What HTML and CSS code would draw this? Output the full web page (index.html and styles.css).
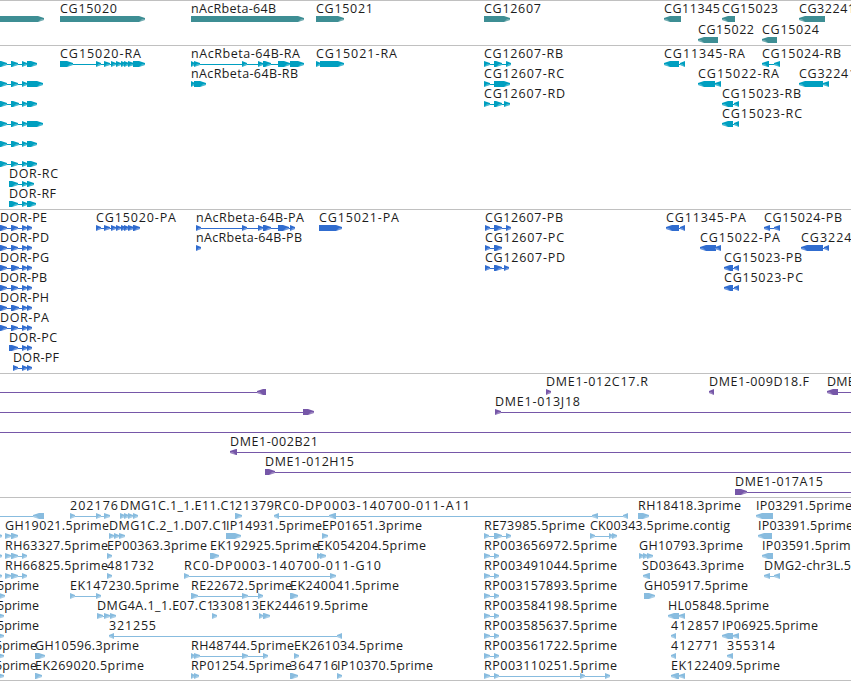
FILE: index.html
```
<!DOCTYPE html>
<html lang="en">

<head>
    <meta charset="UTF-8">
    <meta name="viewport" content="width=device-width, initial-scale=1.0">
    <title>Genome Browser</title>
    <link rel="stylesheet" href="styles.css">
</head>

<body>
    <main class="browser">
        <svg class="track genes" id="genes"></svg>
        <svg class="track transcripts" id="transcripts"></svg>
        <svg class="track proteins" id="proteins"></svg>
        <svg class="track clones" id="clones"></svg>
        <svg class="track ests" id="ests"></svg>
    </main>

    <script src="script.js"></script>
</body>

</html>
```
FILE: styles.css
```
body {
    margin: 0;
    background: white;
    overflow: hidden;
}

.browser {
    display: flex;
    flex-direction: column;
    width: 851px;
    border-bottom: 1px solid #c0c0c0;
}

.track {
    display: block;
    box-sizing: border-box;
    width: 851px;
    box-shadow: inset 0 1px #c0c0c0;
    overflow: hidden;
}

.track text {
    font-family: "Open Sans", "Noto Sans", sans-serif;
    font-size: 12.5px;
    fill: #1c1c1c;
}

.genes {
    height: 45px;
    color: #3e8e94;
}

.transcripts {
    height: 164px;
    color: #009fc0;
}

.proteins {
    height: 164px;
    color: #306ccf;
}

.clones {
    height: 124px;
    color: #7657a8;
}

.ests {
    height: 183px;
    color: #88bcdf;
}

.exon,
.intron {
    fill: currentColor;
}

.intron {
    shape-rendering: crispEdges;
}

.shade {
    fill: white;
    opacity: 0.25;
}
```
FILE: script.js
```
// [row, strand, exons, label, label start, label end]
// exons are "start:end" pairs, joined by an intron line
const dorExons = "-4:7 11:18 22:27 27:32";
const rpExons = "484:490 494:499";

const tracks = {
    genes: [
        [0, "+", "-10:44"],
        [0, "+", "60:145", "CG15020", 60, 117],
        [0, "+", "191:304", "nAcRbeta-64B", 191, 276],
        [0, "+", "316:344", "CG15021", 316, 373],
        [0, "+", "484:510", "CG12607", 484, 541],
        [0, "-", "664:681", "CG11345", 664, 720],
        [0, "-", "722:735", "CG15023", 722, 778],
        [0, "-", "799:825", "CG32241", 799, 855],
        [1, "-", "698:718", "CG15022", 698, 754],
        [1, "-", "762:777", "CG15024", 762, 819]
    ],
    transcripts: [
        [0, "+", "-4:7 11:18 22:27 27:37"],
        [1, "+", "-4:7 11:18 22:27 27:43"],
        [2, "+", "-4:7 11:19 22:27 27:37"],
        [3, "+", "-4:7 11:18 22:27 27:43"],
        [4, "+", "-4:7 11:19 22:27 27:37"],
        [5, "+", "-4:7 11:18 22:27 27:37"],
        [6, "+", "9:18 22:27 27:34", "DOR-RC", 9, 58],
        [7, "+", "9:18 22:27 27:36", "DOR-RF", 9, 56],
        [0, "+", "60:73 96:101 104:110 111:116 116:121 121:126 124:129 128:134 133:145", "CG15020-RA", 60, 141],
        [0, "+", "191:195 194:200 242:247 258:263 263:271 278:290 290:304", "nAcRbeta-64B-RA", 191, 300],
        [1, "+", "191:195 194:206", "nAcRbeta-64B-RB", 191, 298],
        [0, "+", "316:321 320:344", "CG15021-RA", 316, 397],
        [0, "+", "484:490 494:502 506:511", "CG12607-RB", 484, 563],
        [1, "+", "484:490 494:510", "CG12607-RC", 484, 564],
        [2, "+", "484:490 494:502 504:510", "CG12607-RD", 484, 565],
        [0, "-", "664:679 680:685", "CG11345-RA", 664, 745],
        [0, "-", "762:769 774:780", "CG15024-RB", 762, 841],
        [1, "-", "698:715 715:721", "CG15022-RA", 698, 779],
        [1, "-", "799:823 823:829", "CG32241-RA", 799, 878],
        [2, "-", "722:733 734:739", "CG15023-RB", 722, 801],
        [3, "-", "722:733 734:739", "CG15023-RC", 722, 802]
    ],
    proteins: [
        [0, "+", dorExons, "DOR-PE", 0, 47],
        [1, "+", dorExons, "DOR-PD", 0, 49],
        [2, "+", "-4:7 11:19 22:27 27:32", "DOR-PG", 0, 49],
        [3, "+", dorExons, "DOR-PB", 0, 47],
        [4, "+", "-4:7 11:19 22:27 27:32", "DOR-PH", 0, 49],
        [5, "+", dorExons, "DOR-PA", 0, 49],
        [6, "+", "9:18 22:27 27:32", "DOR-PC", 9, 57],
        [7, "+", "13:18 22:27 27:32", "DOR-PF", 13, 59],
        [0, "+", "96:101 104:110 111:116 116:121 121:126 124:129 128:134 133:140", "CG15020-PA", 96, 176],
        [0, "+", "196:201 242:247 258:263 263:271 278:289 290:295", "nAcRbeta-64B-PA", 196, 304],
        [1, "+", "196:201", "nAcRbeta-64B-PB", 196, 302],
        [0, "+", "319:342", "CG15021-PA", 319, 399],
        [0, "+", "485:490 494:502 506:511", "CG12607-PB", 485, 563],
        [1, "+", "485:490 494:502", "CG12607-PC", 485, 564],
        [2, "+", "485:490 494:502 504:509", "CG12607-PD", 485, 565],
        [0, "-", "666:679 680:685", "CG11345-PA", 666, 746],
        [0, "-", "764:770 774:780", "CG15024-PB", 764, 842],
        [1, "-", "700:716 715:721", "CG15022-PA", 700, 780],
        [1, "-", "801:823 824:829", "CG32241-PA", 801, 882],
        [2, "-", "724:733 734:739", "CG15023-PB", 724, 802],
        [3, "-", "724:733 734:739", "CG15023-PC", 724, 803]
    ],
    clones: [
        [0, "-", "-20:-10 257:266"],
        [0, "+", "546:551", "DME1-012C17.R", 546, 648],
        [0, "-", "709:714", "DME1-009D18.F", 709, 809],
        [0, "-", "827:838 870:880", "DME1", 827, 862],
        [1, "+", "-20:-10 303:314"],
        [1, "+", "495:501 870:880", "DME1-013J18", 495, 580],
        [2, "+", "-20:-10 870:880"],
        [3, "-", "230:237 870:880", "DME1-002B21", 230, 318],
        [4, "+", "265:275 870:880", "DME1-012H15", 265, 354],
        [5, "+", "735:747 870:880", "DME1-017A15", 735, 823]
    ],
    ests: [
        [0, "-", "-20:-10 33:44"],
        [0, "+", "70:75 96:101 104:110", "202176", 70, 118],
        [0, "+", "120:125 124:129 128:133 133:138", "DMG1C.1_1.E11.C1", 120, 236],
        [0, "+", "235:242", "21379", 235, 274],
        [0, "-", "274:279 329:336 592:598 623:628", "RC0-DP0003-140700-011-A11", 274, 470],
        [0, "+", "638:649", "RH18418.3prime", 638, 741],
        [0, "-", "756:773", "IP03291.5prime", 756, 852],

        [1, "+", "-4:2"],
        [1, "+", "5:11 11:18", "GH19021.5prime", 5, 109],
        [1, "+", "109:114 114:119 119:125", "DMG1C.2_1.D07.C1", 109, 228],
        [1, "+", "226:241", "IP14931.5prime", 226, 322],
        [1, "+", "322:328", "EP01651.3prime", 322, 422],
        [1, "+", "484:489 494:502 506:511", "RE73985.5prime", 484, 585],
        [1, "+", "590:595 609:613 612:617", "CK00343.5prime.contig", 590, 730],
        [1, "-", "758:772", "IP03391.5prime", 758, 853],

        [2, "+", "-20:-10 -4:2"],
        [2, "+", "5:11 11:18 22:27", "RH63327.5prime", 5, 108],
        [2, "+", "107:112", "EP00363.3prime", 107, 207],
        [2, "+", "210:219", "EK192925.5prime", 210, 319],
        [2, "+", "317:322 320:326", "EK054204.5prime", 317, 426],
        [2, "+", rpExons, "RP003656972.5prime", 484, 617],
        [2, "+", "639:644 643:648 647:653", "GH10793.3prime", 639, 743],
        [2, "-", "762:773", "IP03591.5prime", 762, 858],

        [3, "+", "-20:-10 -4:2"],
        [3, "+", "5:11 11:18 22:27", "RH66825.5prime", 5, 108],
        [3, "+", "107:112", "481732", 107, 154],
        [3, "+", "184:189 330:336", "RC0-DP0003-140700-011-G10", 184, 381],
        [3, "+", rpExons, "RP003491044.5prime", 484, 617],
        [3, "-", "643:650", "SD03643.3prime", 642, 744],
        [3, "-", "764:770 774:780", "DMG2-chr3L.5", 764, 851],

        [4, "+", "-4:5", "5prime", -3, 39],
        [4, "+", "70:75 96:101", "EK147230.5prime", 70, 179],
        [4, "+", "191:198 242:248 258:263", "RE22672.5prime", 191, 292],
        [4, "+", "290:298", "EK240041.5prime", 290, 399],
        [4, "+", rpExons, "RP003157893.5prime", 484, 617],
        [4, "+", "644:655", "GH05917.5prime", 644, 748],

        [5, "+", "-4:4", "5prime", -3, 39],
        [5, "+", "97:103 104:110 110:116", "DMG4A.1_1.E07.C1", 97, 214],
        [5, "+", "212:217", "330813", 212, 259],
        [5, "+", "259:263 263:270", "EK244619.5prime", 259, 368],
        [5, "+", rpExons, "RP003584198.5prime", 484, 617],
        [5, "-", "668:679 679:685", "HL05848.5prime", 668, 769],

        [6, "+", "-4:4", "5prime", -3, 39],
        [6, "-", "109:114 337:342", "321255", 109, 156],
        [6, "+", rpExons, "RP003585637.5prime", 484, 617],
        [6, "-", "671:676", "412857", 671, 719],
        [6, "-", "722:733 733:739", "IP06925.5prime", 722, 818],

        [7, "+", "-4:4", "5prime", -5, 37],
        [7, "+", "35:45", "GH10596.3prime", 35, 139],
        [7, "+", "191:195 194:200 242:248 263:268", "RH48744.5prime", 191, 294],
        [7, "+", "294:299", "EK261034.5prime", 294, 403],
        [7, "+", rpExons, "RP003561722.5prime", 484, 617],
        [7, "-", "671:676", "412771", 671, 719],
        [7, "-", "727:733", "355314", 727, 775],

        [8, "+", "-4:4", "5prime", -5, 37],
        [8, "+", "35:42", "EK269020.5prime", 35, 144],
        [8, "+", "191:195 194:199", "RP01254.5prime", 191, 292],
        [8, "+", "290:298", "364716", 290, 338],
        [8, "+", "337:342", "IP10370.5prime", 337, 433],
        [8, "+", "484:490 494:499 580:585 605:610", "RP003110251.5prime", 484, 617],
        [8, "-", "671:679 679:685", "EK122409.5prime", 671, 780]
    ]
};

function addShape(svg, tag, attrs) {
    const el = document.createElementNS("http://www.w3.org/2000/svg", tag);
    for (const key in attrs) {
        el.setAttribute(key, attrs[key]);
    }
    svg.appendChild(el);
    return el;
}

function drawExon(svg, start, end, y, strand) {
    const width = end - start;
    const head = Math.min(width, 6);
    const tip = strand === "+" ? end : start;
    const back = strand === "+" ? start : end;
    const neck = strand === "+" ? end - head : start + head;
    addShape(svg, "polygon", {
        class: "exon",
        points: `${back},${y} ${neck},${y} ${tip},${y + 2} ${tip},${y + 4} ${neck},${y + 6} ${back},${y + 6}`
    });
    // Lighter underside of the tip
    addShape(svg, "polygon", {
        class: "shade",
        points: `${neck},${y + 6} ${tip},${y + 4} ${tip},${y + 3} ${(neck + tip) / 2},${y + 3}`
    });
}

function drawTrack(id) {
    const svg = document.getElementById(id);
    const rowHeight = id === "genes" ? 21 : 20;

    tracks[id].forEach(([row, strand, exonText, label, from, to]) => {
        const top = row * rowHeight;
        const exons = exonText.split(" ").map(pair => pair.split(":").map(Number));
        const first = exons[0][0];
        const last = exons[exons.length - 1][1];

        if (exons.length > 1) {
            addShape(svg, "rect", { class: "intron", x: first + 2, y: top + 19, width: last - first - 4, height: 1 });
        }
        exons.forEach(([start, end]) => drawExon(svg, start, end, top + 16, strand));

        if (label) {
            const text = addShape(svg, "text", { x: from, y: top + 13, textLength: to - from });
            text.textContent = label;
        }
    });
}

Object.keys(tracks).forEach(drawTrack);
```
